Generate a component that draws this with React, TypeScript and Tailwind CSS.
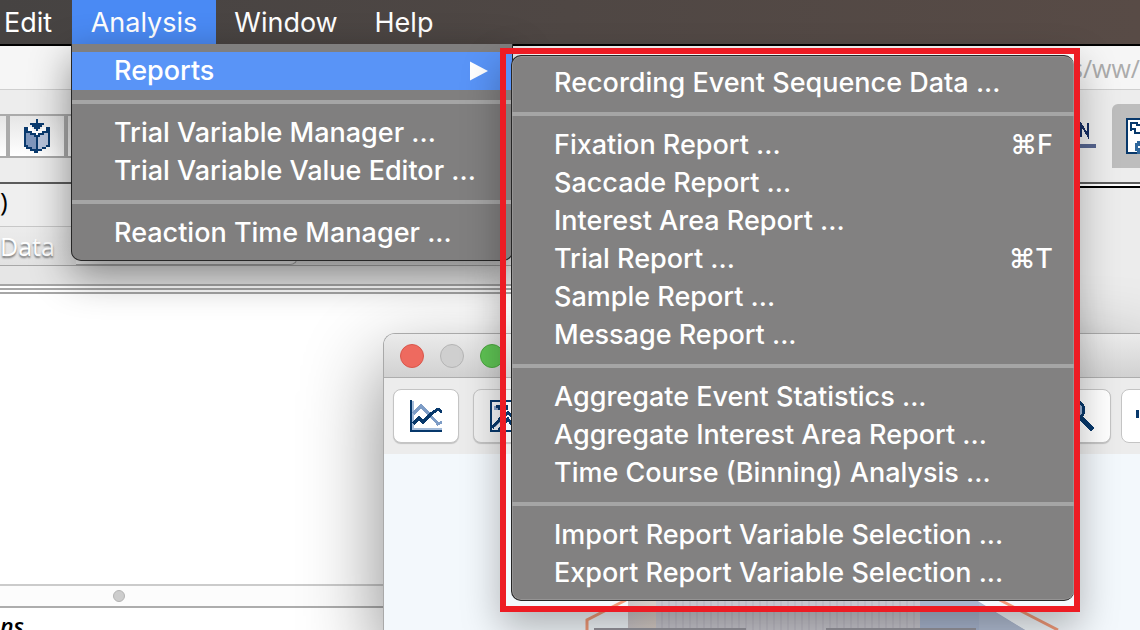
import React from "react";

type Entry = { label: string; shortcut?: string; submenu?: boolean };

const analysisMenu: Entry[][] = [
  [{ label: "Reports", submenu: true }],
  [{ label: "Trial Variable Manager ..." }, { label: "Trial Variable Value Editor ..." }],
  [{ label: "Reaction Time Manager ..." }],
];

const reportsMenu: Entry[][] = [
  [{ label: "Recording Event Sequence Data ..." }],
  [
    { label: "Fixation Report ...", shortcut: "⌘F" },
    { label: "Saccade Report ..." },
    { label: "Interest Area Report ..." },
    { label: "Trial Report ...", shortcut: "⌘T" },
    { label: "Sample Report ..." },
    { label: "Message Report ..." },
  ],
  [
    { label: "Aggregate Event Statistics ..." },
    { label: "Aggregate Interest Area Report ..." },
    { label: "Time Course (Binning) Analysis ..." },
  ],
  [{ label: "Import Report Variable Selection ..." }, { label: "Export Report Variable Selection ..." }],
];

function MenuGroups({ groups }: { groups: Entry[][] }) {
  return (
    <>
      {groups.map((group, i) => (
        <React.Fragment key={i}>
          {i > 0 && <div role="separator" className="my-2.5 h-1 bg-[#a5a5a5]" />}
          {group.map((entry) => (
            <button
              key={entry.label}
              role="menuitem"
              className={`flex h-[38px] w-full items-center justify-between pr-[21px] pl-[42px] text-left whitespace-nowrap ${
                entry.submenu ? "bg-[#5994f7]" : ""
              }`}
            >
              <span>{entry.label}</span>
              {entry.shortcut && <span>{entry.shortcut}</span>}
              {entry.submenu && (
                <svg width="21" height="20" viewBox="0 0 21 20" aria-hidden="true">
                  <path d="M0 0.5L18 10L0 19.5Z" fill="#fff" />
                </svg>
              )}
            </button>
          ))}
        </React.Fragment>
      ))}
    </>
  );
}

function BookIcon() {
  return (
    <svg width="26" height="34" viewBox="0 0 26 34" shapeRendering="crispEdges" aria-hidden="true">
      <path d="M0 8h6v2h4v2h6v-2h4V8h6v20h-4v2h-4v2h-4v2h-4v-2H6v-2H2v-2H0z" fill="#0a3a6e" />
      <path d="M2 14h4v2h4v2h2v12H8v-2H4v-2H2z" fill="#7f97bd" />
      <path d="M14 18h2v-2h4v-2h4v12h-2v2h-4v2h-4z" fill="#b7c3da" />
      <path d="M4 8h4v2h2v2h6v-2h2V8h4v4h-4v2h-4v2h-2v-2H8v-2H4z" fill="#fff" />
      <path d="M12 0h2v4h6v2h-2v2h-2v2h-2v2h-2v-2h-2V8H8V6H6V4h6z" fill="#0a3a6e" />
    </svg>
  );
}

function ChartIcon() {
  return (
    <svg width="34" height="34" viewBox="0 0 34 34" shapeRendering="crispEdges" aria-hidden="true">
      <path d="M3 1V29H32" fill="none" stroke="#a4bcdb" strokeWidth="2" />
      <path d="M3 14L11 6L20 15L28 24L32 22" fill="none" stroke="#7d9cc6" strokeWidth="3" />
      <path d="M3 24L9 18L13 22L21 14L28 9L32 12" fill="none" stroke="#07386b" strokeWidth="3" />
      <path d="M1 0V31H32" fill="none" stroke="#07386b" strokeWidth="2" />
    </svg>
  );
}

function ImageIcon() {
  return (
    <svg width="34" height="34" viewBox="0 0 34 34" shapeRendering="crispEdges" aria-hidden="true">
      <rect x="1" y="1" width="32" height="30" fill="#f4f6fa" stroke="#07386b" strokeWidth="2" />
      <path d="M4 6h4v4H4zM3 24l7-7 6-5v5l-6 5-4 5H3z" fill="#8aa4cb" />
      <path d="M6 5h12v5H8V8H6z" fill="#07386b" />
      <path d="M2 28L10 19L18 13L26 20M9 30L14 23L18 19L24 28" fill="none" stroke="#07386b" strokeWidth="3" />
    </svg>
  );
}

function MagnifierIcon() {
  return (
    <svg width="34" height="34" viewBox="0 0 34 34" shapeRendering="crispEdges" aria-hidden="true">
      <circle cx="13" cy="10" r="9" fill="#9eb7d8" stroke="#07386b" strokeWidth="3" />
      <path d="M19 18L31 30" stroke="#07386b" strokeWidth="5" />
    </svg>
  );
}

function TreeIcon() {
  return (
    <svg width="36" height="36" viewBox="0 0 36 36" shapeRendering="crispEdges" aria-hidden="true">
      <rect x="1" y="1" width="34" height="34" fill="#fff" stroke="#07386b" strokeWidth="2" />
      <path d="M5 13V5h6v2h4M5 11h4v4h6" fill="none" stroke="#07386b" strokeWidth="2" />
      <path d="M16 24h-4v2h-2v5h2v3h4" fill="none" stroke="#2f679c" strokeWidth="3" />
    </svg>
  );
}

function TextLineIcon() {
  return (
    <svg width="18" height="28" viewBox="0 0 18 28" shapeRendering="crispEdges" aria-hidden="true">
      <path d="M1 15V2L8 14V1" fill="none" stroke="#172f63" strokeWidth="2" />
      <rect x="0" y="22" width="16" height="4" fill="#56658f" />
    </svg>
  );
}

function SceneImage() {
  return (
    <svg className="ml-[200px] shrink-0" width="480" height="40" viewBox="0 0 480 40" aria-label="Scene photograph" role="img">
      <defs>
        <pattern id="slats" width="7" height="40" patternUnits="userSpaceOnUse">
          <rect width="7" height="40" fill="#c7c6cd" />
          <rect width="2" height="40" fill="#bfbdc6" />
        </pattern>
        <linearGradient id="wall" x1="0" x2="1">
          <stop offset="0" stopColor="#cbc5c7" />
          <stop offset="1" stopColor="#d7cdc6" />
        </linearGradient>
      </defs>
      <rect x="44" width="28" height="40" fill="url(#wall)" />
      <rect x="72" width="264" height="40" fill="url(#slats)" />
      <path d="M336 0h40l65 40H336z" fill="#a9b6cf" />
      <path d="M395 13l46 27h-46z" fill="#b1bdd3" />
      <rect x="10" y="38" width="152" height="2" fill="#96959d" />
      <rect x="242" y="38" width="150" height="2" fill="#96959d" />
      <path d="M3 40V30L42 10M412 8L474 40" fill="none" stroke="#f29a78" strokeWidth="3" />
    </svg>
  );
}

const toolButton =
  "flex h-[54px] w-[66px] shrink-0 items-center justify-center rounded-lg border border-[#c4c4c4] pt-0.5 pl-0.5 shadow-[0_1px_1px_#0000002e]";

export default function App() {
  return (
    <div className="relative flex h-screen flex-col overflow-hidden bg-white font-['Inter','Liberation_Sans',sans-serif] text-[27px] text-white">
      <nav
        aria-label="Menu bar"
        className="flex h-11 shrink-0 items-stretch bg-linear-to-r from-[#464342] via-[#4f4744] to-[#584b46] *:pt-0.5"
      >
        <button className="w-[72px] pl-1 text-left">Edit</button>
        <button className="w-36 bg-[#4a8af4]">Analysis</button>
        <button className="w-[140px]">Window</button>
        <button className="w-24">Help</button>
      </nav>

      <main className="flex min-h-0 grow flex-col border-t-2 border-black font-['Open_Sans',sans-serif] text-[26px] text-black">
        <header className="flex h-11 shrink-0 items-center justify-end border-b border-[#cfcfcf] bg-[#f6f6f6] pt-0.5 text-[25px] text-[#ababab]">
          s/ww/
        </header>

        <div className="flex h-[94px] shrink-0 items-center justify-between border-b-2 border-[#5c5c5c] bg-[#ededed]">
          <div className="flex h-11 border-y-2 border-[#ababab] bg-linear-to-b from-[#e6e6e6] to-white">
            <div className="w-1.5" />
            <button aria-label="Import data" className="flex w-[62px] items-center justify-center border-x-4 border-[#ababab]">
              <BookIcon />
            </button>
            <div className="w-10" />
          </div>
          <div className="flex items-center gap-3.5">
            <button aria-label="Name">
              <TextLineIcon />
            </button>
            <button
              aria-label="Tree view"
              className="flex h-16 w-7 items-center overflow-hidden rounded-tl-md bg-[#bdbdbd] pl-3.5 *:shrink-0"
            >
              <TreeIcon />
            </button>
          </div>
        </div>

        <div className="flex grow">
          <section className="flex w-[70%] flex-col bg-white">
            <div className="flex h-[43px] items-center border-b border-[#c8c8c8] bg-[#efefef] pb-2">)</div>
            <div className="flex h-[39px] items-center border-b border-[#a8a8a8] bg-linear-to-b from-[#ececec] to-[#e2e2e2]">
              <span className="w-[76px] pt-0.5 text-[25px] text-white [text-shadow:0_2px_2px_#777]">Data</span>
              <span className="h-full w-[222px] rounded-br-lg border-r border-b border-[#a8a8a8] bg-[#f0f0f0]" />
            </div>
            <div className="h-[18px] bg-[#e6e6e6]" />
            <div className="h-0.5 bg-[#a6a6a6]" />
            <div className="my-0.5 h-0.5 bg-[#a6a6a6]" />
            <div className="h-0.5 bg-[#a6a6a6]" />
            <div className="grow" />
            <div className="flex h-6 items-center border-t-2 border-b-2 border-t-[#cbcbcb] border-b-[#adadad] bg-[#fcfcfc] pl-[113px]">
              <span className="size-3 rounded-full border border-[#b4b4b4] bg-[#cdcdcd]" />
            </div>
            <div className="h-[22px] pt-1 text-[23px] leading-7 font-semibold italic">ns</div>
          </section>
          <aside className="mt-0.5 grow border-t-2 border-black bg-[#ececec]" />
        </div>
      </main>

      <section
        aria-label="Viewer window"
        className="absolute top-[333px] -right-3 bottom-0 left-[383px] flex flex-col overflow-hidden rounded-tl-xl border-t border-l border-[#a9a9a9] bg-[#f3f8fc] shadow-[0_30px_80px_#00000078]"
      >
        <div className="flex h-11 shrink-0 items-center gap-4 border-b border-[#adadad] bg-linear-to-b from-[#ebebeb] to-[#d1d1d1] pl-4">
          <button aria-label="Close" className="size-6 rounded-full border border-[#d8574c] bg-[#ee6a5f]" />
          <button aria-label="Minimize" className="size-6 rounded-full border border-[#b4b4b4] bg-[#cfcfcf]" />
          <button aria-label="Zoom" className="size-6 rounded-full border border-[#4ba63f] bg-[#5fc454]" />
        </div>
        <div className="flex h-[76px] shrink-0 items-center bg-[#ececec] pl-[9px]">
          <button aria-label="Line chart" className={`${toolButton} bg-white`}>
            <ChartIcon />
          </button>
          <button aria-label="Image view" className={`${toolButton} ml-3.5 bg-[#f0f0f0]`}>
            <ImageIcon />
          </button>
          <div className="grow" />
          <button aria-label="Magnify" className={`${toolButton} mr-2.5 bg-white`}>
            <MagnifierIcon />
          </button>
          <button
            aria-label="More tools"
            className="flex h-[54px] w-[31px] items-center justify-end rounded-l-lg border border-[#c4c4c4] bg-white pr-3"
          >
            <svg width="3" height="12" aria-hidden="true">
              <rect width="3" height="8" fill="#07386b" />
            </svg>
          </button>
        </div>
        <div className="flex min-h-0 grow items-end">
          <SceneImage />
        </div>
      </section>

      <div
        role="menu"
        aria-label="Analysis"
        className="absolute top-11 left-[71px] w-[442px] rounded-b-[10px] border-x border-b border-[#262626] bg-[#807f7f] py-2 font-medium shadow-[0_14px_40px_#00000070]"
      >
        <MenuGroups groups={analysisMenu} />
      </div>

      <div className="absolute top-12 left-[500px] w-[580px] border-6 border-[#ed1c24] pt-px pb-[5px] pl-[5px] shadow-[0_16px_36px_#00000048]">
        <div
          role="menu"
          aria-label="Reports"
          className="rounded-[10px] border border-r-0 border-[#262626] bg-[#828181] py-2 font-medium inset-shadow-[0_0_0_1px_#ffffff28]"
        >
          <MenuGroups groups={reportsMenu} />
        </div>
      </div>
    </div>
  );
}
